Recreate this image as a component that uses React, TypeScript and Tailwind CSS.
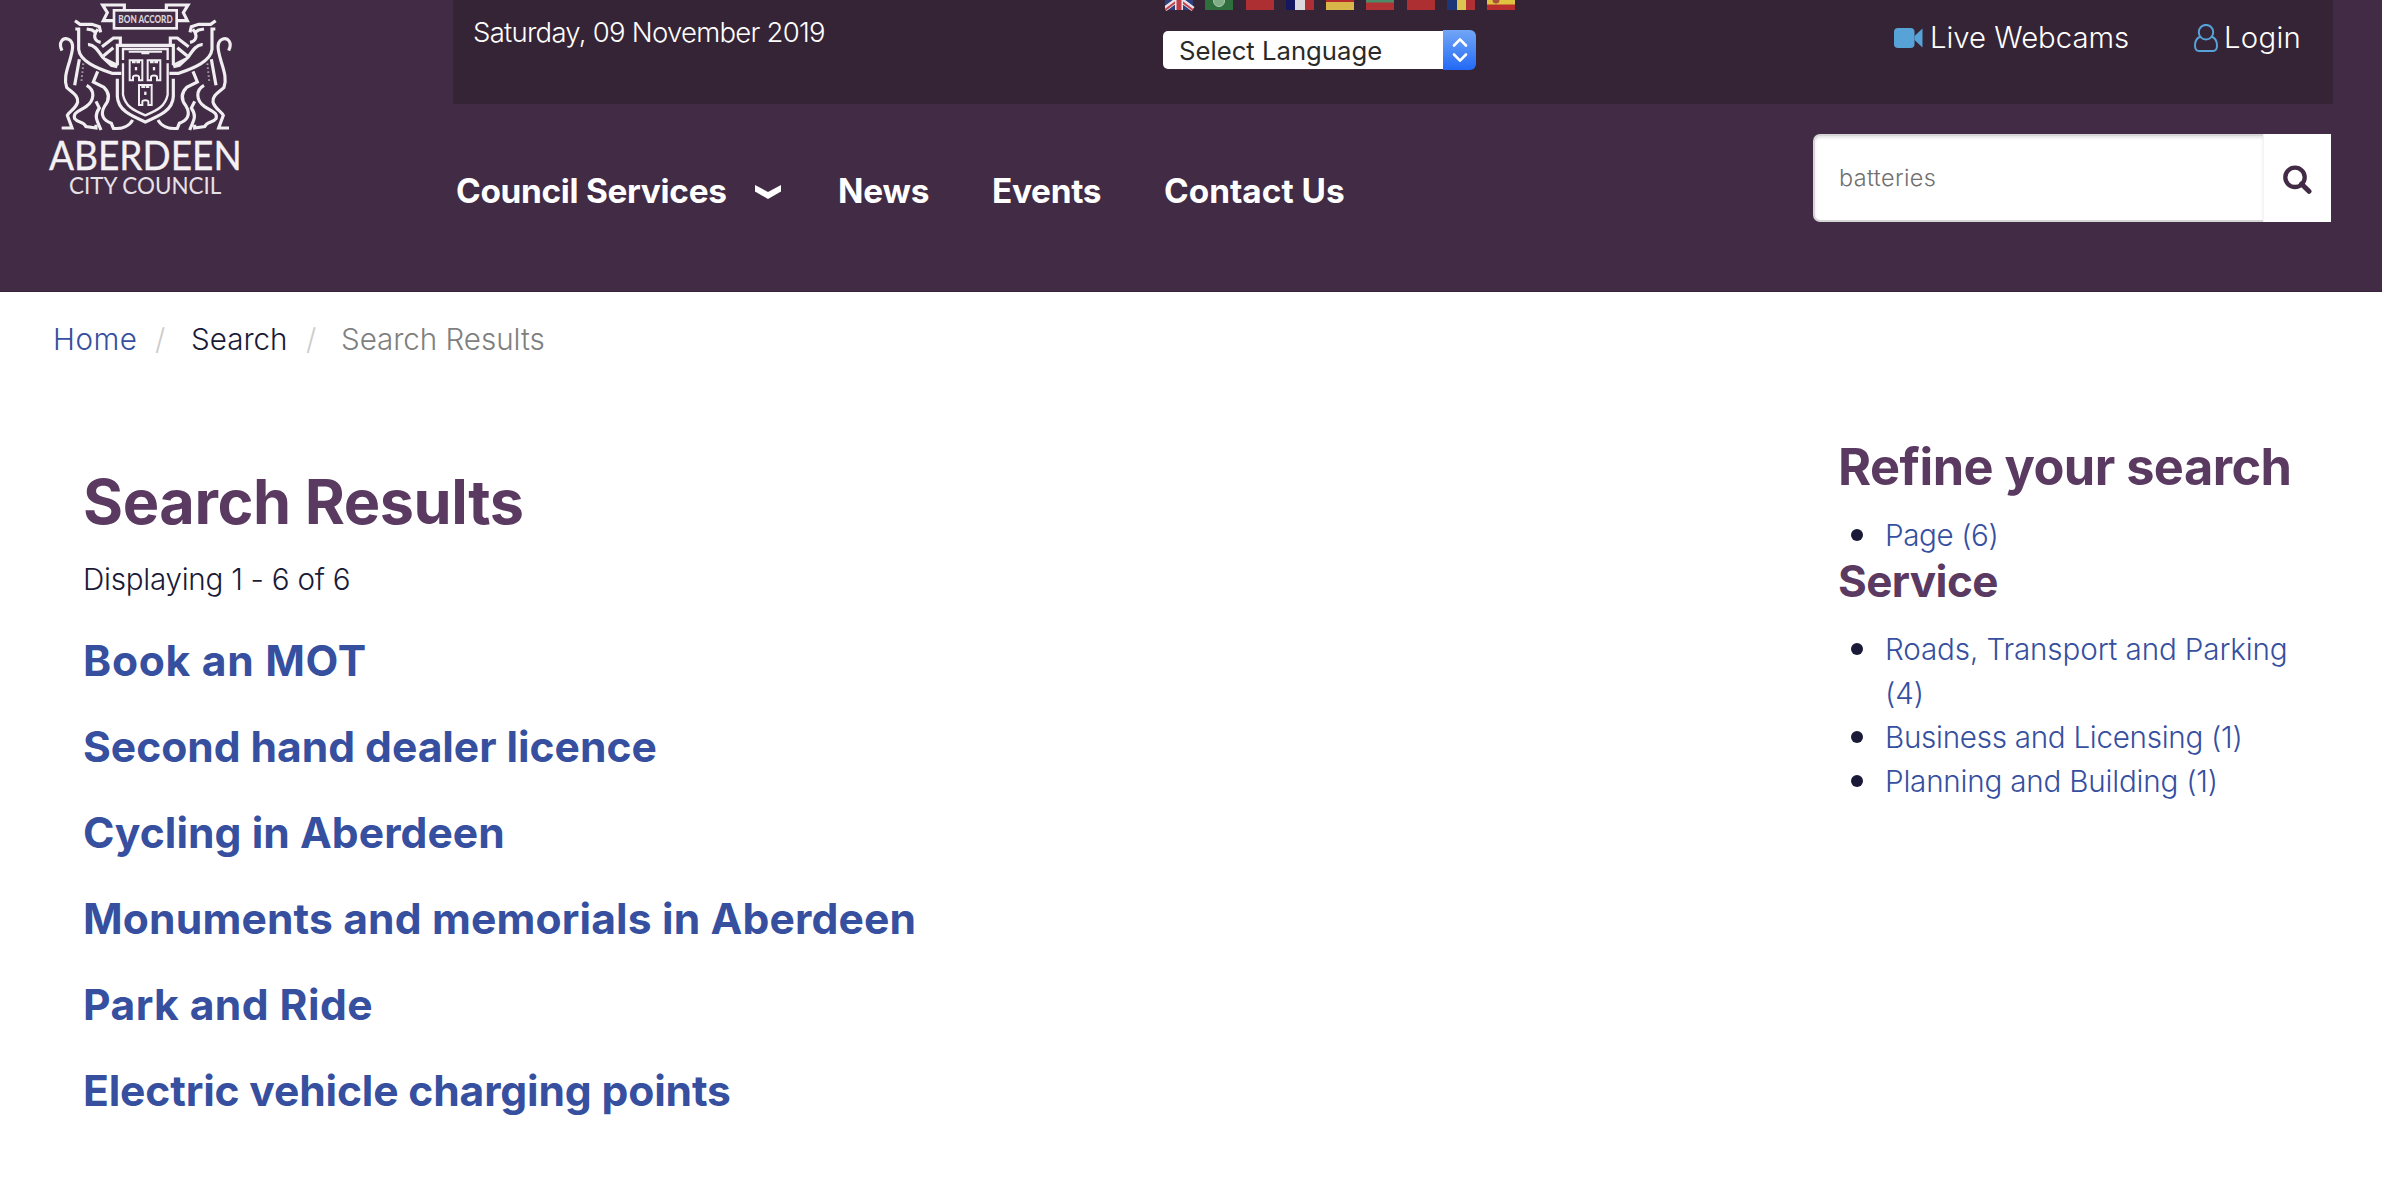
import React from 'react';

const results = [
  { title: 'Book an MOT', className: 'tracking-[0.7px]' },
  { title: 'Second hand dealer licence', className: 'tracking-[-0.04px]' },
  { title: 'Cycling in Aberdeen', className: 'tracking-[0.05px]' },
  { title: 'Monuments and memorials in Aberdeen', className: 'tracking-[0.14px]' },
  { title: 'Park and Ride', className: 'tracking-[0.42px]' },
  { title: 'Electric vehicle charging points', className: 'tracking-[-0.16px]' },
];

const services = [
  { label: 'Roads, Transport and Parking (4)', className: 'tracking-[-0.12px]' },
  { label: 'Business and Licensing (1)', className: 'tracking-[-0.28px]' },
  { label: 'Planning and Building (1)', className: 'tracking-[-0.2px]' },
];

function Supporter() {
  return (
    <g>
      <path d="M96 152C84 128 98 110 116 118C136 128 126 158 118 186C108 218 102 240 110 262C124 276 146 286 143 306C138 326 118 334 112 346L126 384H95" />
      <path d="M135 62L150 73H186L208 80L212 97" />
      <path d="M136 87H146V148C150 184 200 204 246 220H274" />
      <path d="M170 87L186 90L196 97L204 88M197 97C190 112 196 124 212 127" />
      <path d="M174 134C190 132 202 148 218 172L244 196L262 200" />
      <path d="M216 140L250 114H271V134" />
      <path d="M220 168L250 143M226 178L262 196" />
      <path d="M203 214L190 246L222 262C240 280 238 300 224 318C208 346 222 362 244 370L250 385C276 388 298 378 308 360" />
      <path d="M170 256C196 270 194 302 168 320C146 334 128 338 134 356C144 370 160 362 168 380L198 384V374" />
      <path d="M198 304L208 324C190 350 202 362 213 390" />
      <path d="M148 178L134 256" />
      <path d="M160 190L154 246" strokeWidth="6" strokeDasharray="5 7" opacity=".6" />
    </g>
  );
}

function Castle({ x, y }: { x: number; y: number }) {
  return (
    <g transform={`translate(${x} ${y})`}>
      <path d="M1 0V60H11V50C11 44 29 44 29 50V60H39V0H29V6H24V0H16V6H11V0Z" strokeWidth="6" />
      <path d="M20 20V30" strokeWidth="7" />
    </g>
  );
}

function CouncilLogo() {
  return (
    <svg viewBox="0 0 690 630" className="block h-[210px] w-[230px]" fill="none" stroke="#f1eef2" strokeWidth="9.5">
      <path d="M283 28V15H218L232 38L220 62H250" />
      <path d="M409 28V15H474L460 38L472 62H442" />
      <rect x="252" y="31" width="188" height="54" strokeWidth="8" />
      <text x="265" y="69" textLength="163" lengthAdjust="spacingAndGlyphs" fontFamily="Lato, sans-serif" fontWeight="900" fontSize="33" fill="#d9d3da" stroke="none">
        BON ACCORD
      </text>
      <path d="M262 196V136H430V196M262 236V290C264 330 300 346 346 366C392 346 428 330 430 290V236" />
      <path d="M279 180V147H413V180M279 190V284C286 318 308 330 346 346C384 330 406 318 413 284V190" strokeWidth="7" />
      <path d="M296 155H396M334 160H358" strokeWidth="6" />
      <Castle x={298} y={181} />
      <Castle x={352} y={181} />
      <Castle x={326} y={255} />
      <Supporter />
      <g transform="translate(692 0) scale(-1 1)">
        <Supporter />
      </g>
      <text x="57" y="509" textLength="578" lengthAdjust="spacingAndGlyphs" fontFamily="Lato, sans-serif" fontWeight="400" fontSize="121" fill="#f4f1f4" stroke="#f4f1f4" strokeWidth="1">
        ABERDEEN
      </text>
      <text x="117" y="581" textLength="457" lengthAdjust="spacingAndGlyphs" fontFamily="Lato, sans-serif" fontWeight="400" fontSize="69" fill="#e6e1e7" stroke="none">
        CITY COUNCIL
      </text>
    </svg>
  );
}

function Flags() {
  return (
    <svg viewBox="0 0 350 11" className="ml-0.5 block h-[11px] w-[350px]">
      <g>
        <rect width="28" height="10" fill="#2f3f7c" />
        <path d="M0 9L12 0M28 9L16 0" stroke="#e6e3ea" strokeWidth="5" />
        <path d="M0 10L12 1M28 10L16 1" stroke="#c6404a" strokeWidth="2" />
        <path d="M14 0V10" stroke="#e6e3ea" strokeWidth="8" />
        <path d="M14 0V10" stroke="#c03a46" strokeWidth="5" />
      </g>
      <rect x="40" width="28" height="10" fill="#2f6f3d" />
      <circle cx="54" cy="1" r="5.5" fill="#7fae86" stroke="#a9c9ad" />
      <rect x="81" width="28" height="10" fill="#ad2f31" />
      <path d="M121 0h9v10h-9z" fill="#14195f" />
      <path d="M130 0h10v10h-10z" fill="#dcd8e0" />
      <path d="M140 0h9v10h-9z" fill="#ad2f35" />
      <path d="M161 0h28v3h-28z" fill="#b5282c" />
      <path d="M161 2h28v8h-28z" fill="#d8b649" />
      <path d="M201 0h28v3h-28z" fill="#4c8a68" />
      <path d="M201 2.500h28v7.500h-28z" fill="#b13235" />
      <rect x="242" width="28" height="10" fill="#ad2f31" />
      <path d="M282 0h10v10h-10z" fill="#1d3677" />
      <path d="M292 0h9v10h-9z" fill="#dcc650" />
      <path d="M301 0h9v10h-9z" fill="#b03034" />
      <path d="M322 0h28v5h-28z" fill="#dfc23f" />
      <path d="M322 4.500h28v5.500h-28z" fill="#b92d2e" />
      <circle cx="331" cy="0" r="3.500" fill="#a8503a" />
    </svg>
  );
}

function LanguageSelect() {
  return (
    <div className="mt-[19px] flex h-10 w-[313px] items-center">
      <div className="h-[38px] flex-1 rounded-l-[5px] bg-white pl-4 text-[25.7px] leading-[40px] font-normal text-[#2a2a2a]">
        Select Language
      </div>
      <div className="flex h-10 w-[33px] items-center justify-center rounded-r-[6px] bg-linear-to-b from-[#72a5f5] to-[#2169f6]">
        <svg viewBox="0 0 16 26" className="h-[26px] w-4" fill="none" stroke="white" strokeWidth="2.600" strokeLinecap="round" strokeLinejoin="round">
          <path d="M2 8.500L8 2.300L14 8.500M2 17.500L8 23.700L14 17.500" />
        </svg>
      </div>
    </div>
  );
}

function TopBar() {
  return (
    <div className="flex h-[104px] bg-[#352436] text-white">
      <div className="w-[710px] pt-3 pl-5 text-[27.5px] leading-10 tracking-[-0.74px]">Saturday, 09 November 2019</div>
      <div className="w-[731px]">
        <Flags />
        <LanguageSelect />
      </div>
      <div className="flex flex-1 pt-[17px] text-[29.3px] leading-[41px]">
        <a className="flex w-[300px]">
          <svg viewBox="0 0 29 20" className="mt-[11px] mr-[7px] h-5 w-[29px]" fill="#57a2d6">
            <rect width="20.500" height="20" rx="4" />
            <path d="M20.500 8L28.500 0.500V19.500L20.500 12Z" />
          </svg>
          Live Webcams
        </a>
        <a className="flex tracking-[0.3px]">
          <svg viewBox="0 0 24 28" className="mt-[7px] mr-[6px] h-7 w-6" fill="none" stroke="#57a2d6" strokeWidth="2">
            <ellipse cx="12" cy="8.200" rx="7.200" ry="7.300" />
            <path d="M6.500 12.500C2.500 14 1 17.500 1 21.500C1 25.500 2.500 27 5 27H19C21.500 27 23 25.500 23 21.500C23 17.500 21.500 14 17.500 12.500" />
          </svg>
          Login
        </a>
      </div>
    </div>
  );
}

function SearchBox() {
  return (
    <form className="mt-[30px] mr-0.5 ml-auto flex h-[88px] w-[518px]">
      <div className="w-[450px] rounded-l-[7px] border-y-2 border-l-2 border-[#d6d6d6] bg-white pl-[24px] text-[23.4px] leading-[84px] tracking-[0.4px] text-[#6f6f6f] shadow-[inset_0_2px_3px_rgba(0,0,0,0.1)]">
        batteries
      </div>
      <div className="flex flex-1 items-start border-l border-[#f4f4f4] bg-white pt-[31px] pl-[19px]">
        <svg viewBox="0 0 29 29" className="size-[29px]" fill="none" stroke="#422b44">
          <circle cx="12" cy="12.300" r="9.700" strokeWidth="4.300" />
          <path d="M18.500 19L26 26.300" strokeWidth="5" strokeLinecap="round" />
        </svg>
      </div>
    </form>
  );
}

function MainNav() {
  return (
    <div className="flex">
      <nav className="flex pt-[67px] pl-[3px] text-[33.4px] leading-10 font-bold text-white">
        <a className="flex w-[382px] tracking-[-0.31px]">
          Council Services
          <svg viewBox="0 0 26 14" className="mt-[14px] ml-[28px] h-3.5 w-[26px]" fill="white">
            <path d="M0 0L13 7L26 0V6.500L13 14L0 6.500Z" />
          </svg>
        </a>
        <a className="w-[154px] tracking-[-0.17px]">News</a>
        <a className="w-[172px] tracking-[-0.3px]">Events</a>
        <a>Contact Us</a>
      </nav>
      <SearchBox />
    </div>
  );
}

function Facet({ label, className }: { label: string; className?: string }) {
  return (
    <li className="flex">
      <span className="mt-4 mr-[22px] ml-[13px] size-3 shrink-0 rounded-full bg-[#1a1a38]" />
      <a className={className}>{label}</a>
    </li>
  );
}

export default function App() {
  return (
    <div className="h-[1196px] overflow-hidden bg-white font-['Inter',sans-serif] font-light text-[#1a1a38]">
      <header className="flex h-[292px] border-b border-[#38243a] bg-[#422b44]">
        <div className="w-[453px] pl-[30px]">
          <CouncilLogo />
        </div>
        <div className="w-[1880px]">
          <TopBar />
          <MainNav />
        </div>
      </header>

      <nav className="flex pt-[27px] pl-[53px] text-[29.6px] leading-[40px]">
        <a className="w-[102px] tracking-[0.5px] text-[#364f9f]">Home</a>
        <span className="w-[36px] text-[#cccccc]">/</span>
        <a className="w-[115px]">Search</a>
        <span className="w-[35px] text-[#cccccc]">/</span>
        <span className="tracking-[-0.05px] text-[#7f7f7f]">Search Results</span>
      </nav>

      <div className="flex">
        <main className="w-[1760px] pt-[103px] pl-[83px]">
          <h1 className="text-[61.2px] leading-[80px] font-bold tracking-[-0.42px] text-[#5b3a62]">Search Results</h1>
          <p className="pt-[17px] text-[29.6px] leading-10 tracking-[-0.25px]">Displaying 1 - 6 of 6</p>
          <div className="pt-[19px] text-[42.6px] leading-[86px] font-bold text-[#364f9f]">
            {results.map((r) => (
              <h2 key={r.title} className={r.className}>
                {r.title}
              </h2>
            ))}
          </div>
        </main>
        <aside className="w-[559px] pt-[71px] pl-[78px]">
          <h2 className="text-[50.5px] leading-[74px] font-bold tracking-[-0.55px] whitespace-nowrap text-[#5b3a62]">Refine your search</h2>
          <ul className="pt-[9px] text-[29.6px] leading-[44px] text-[#364f9f]">
            <Facet label="Page (6)" className="tracking-[-0.4px]" />
          </ul>
          <h3 className="-mt-0.5 text-[44px] leading-[52px] font-bold tracking-[-0.6px] text-[#5b3a62]">Service</h3>
          <ul className="w-[472px] pt-5 text-[29.6px] leading-[44px] text-[#364f9f]">
            {services.map((s) => (
              <Facet key={s.label} {...s} />
            ))}
          </ul>
        </aside>
      </div>
    </div>
  );
}
